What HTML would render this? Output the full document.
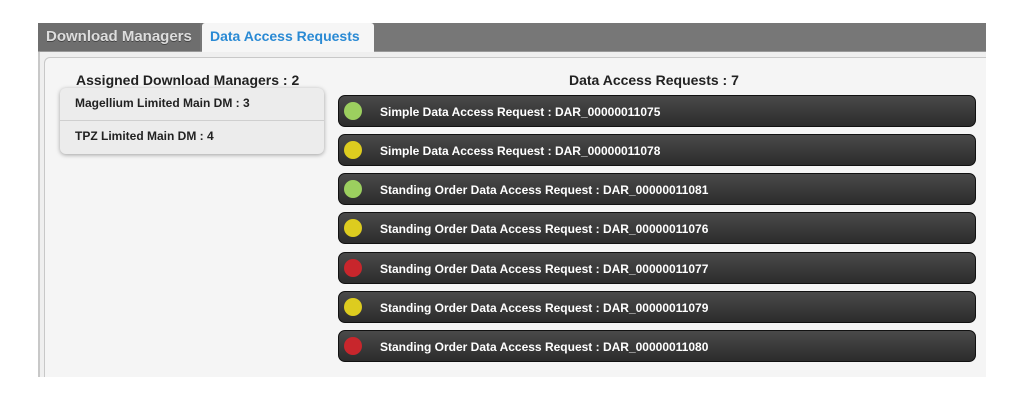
<!DOCTYPE html>
<html><head><style>
body{margin:0;width:1024px;height:400px;background:#fff;font-family:"Liberation Sans",Arial,sans-serif;position:relative;overflow:hidden}
.wrap{position:absolute;left:38px;top:23px;width:948px;height:354px;background:#efefef;border-left:2px solid #c8c8c8;box-sizing:border-box}
.bar{position:absolute;left:38px;top:23px;width:948px;height:28px;background:#777;border-bottom:1px solid #999}
.tab1{position:absolute;left:38px;top:23px;width:162px;height:28px;background:#6e6e6e;color:#ddd;font-weight:bold;font-size:15px;line-height:28px;text-indent:8px;text-shadow:0 1px 0 #444}
.tab2{position:absolute;left:202px;top:23px;width:172px;height:29px;background:#f6f6f6;color:#2a8ad4;font-weight:bold;font-size:14px;line-height:26px;text-indent:8px;border-radius:3px 3px 0 0}
.panel{position:absolute;left:44px;top:57px;width:950px;height:330px;border:1px solid #c8c8c8;border-radius:6px;background:#f5f5f5}
.h{position:absolute;top:72px;font-weight:bold;font-size:14px;color:#222}
.list{position:absolute;left:60px;top:88px;width:264px;height:66px;background:#ececec;border-radius:6px;box-shadow:0 1px 4px rgba(0,0,0,.35)}
.list div{height:32px;line-height:30px;font-size:12px;font-weight:bold;color:#222;padding-left:15px;box-sizing:border-box}
.list div+div{border-top:1px solid #cfcfcf;height:34px}
.btn{position:absolute;left:338px;width:638px;height:32px;border-radius:7px;background:linear-gradient(#4a4a4a,#2c2c2c);border:1px solid #111;box-sizing:border-box;color:#fff;font-weight:bold;font-size:12px;line-height:33px;padding-left:41px}
.btn i{position:absolute;left:5px;top:6px;width:18px;height:18px;border-radius:50%}
.g{background:#9ccf5f}.y{background:#ddcc1f}.r{background:#c8262c}
</style></head><body>
<div class="wrap"></div>
<div class="panel"></div>
<div class="bar"></div>
<div class="tab1">Download Managers</div>
<div class="tab2">Data Access Requests</div>
<div class="h" style="left:76px">Assigned Download Managers : 2</div>
<div class="h" style="left:569px">Data Access Requests : 7</div>
<div class="list"><div>Magellium Limited Main DM : 3</div><div>TPZ Limited Main DM : 4</div></div>
<div class="btn" style="top:95px"><i class="g"></i>Simple Data Access Request : DAR_00000011075</div>
<div class="btn" style="top:134px"><i class="y"></i>Simple Data Access Request : DAR_00000011078</div>
<div class="btn" style="top:173px"><i class="g"></i>Standing Order Data Access Request : DAR_00000011081</div>
<div class="btn" style="top:212px"><i class="y"></i>Standing Order Data Access Request : DAR_00000011076</div>
<div class="btn" style="top:252px"><i class="r"></i>Standing Order Data Access Request : DAR_00000011077</div>
<div class="btn" style="top:291px"><i class="y"></i>Standing Order Data Access Request : DAR_00000011079</div>
<div class="btn" style="top:330px"><i class="r"></i>Standing Order Data Access Request : DAR_00000011080</div>
<div style="position:absolute;left:0;top:377px;width:1024px;height:23px;background:#fff"></div>
<div style="position:absolute;left:986px;top:51px;width:38px;height:349px;background:#fff"></div>
</body></html>
